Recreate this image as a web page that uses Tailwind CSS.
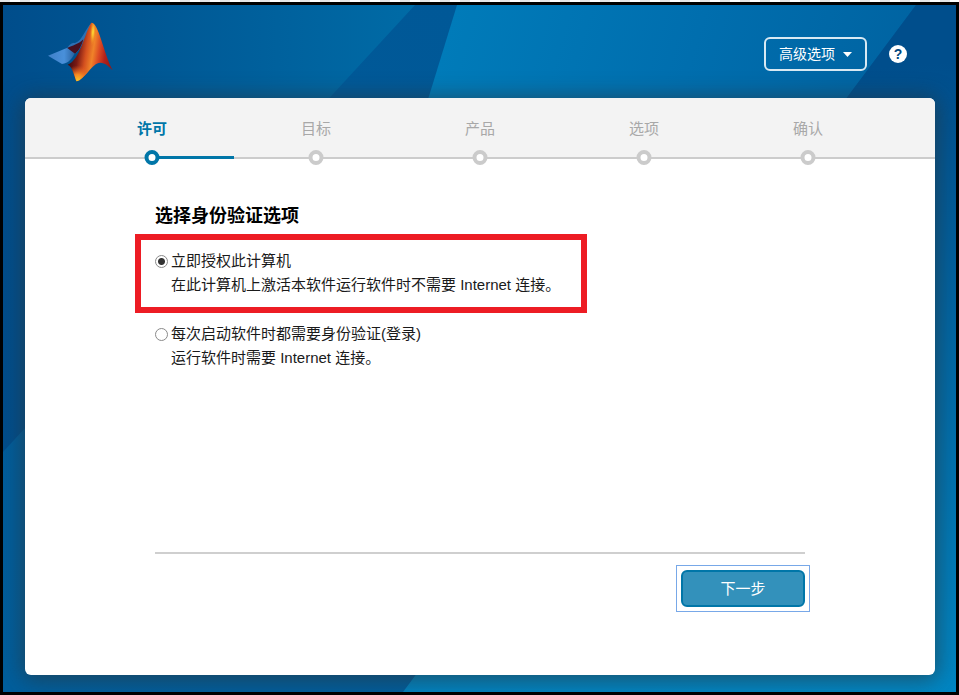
<!DOCTYPE html>
<html lang="zh-CN">
<head>
<meta charset="utf-8">
<meta name="viewport" content="width=device-width, initial-scale=1">
<title>选择身份验证选项</title>
<script src="https://cdn.jsdelivr.net/npm/@tailwindcss/browser@4"></script>
</head>
<body class="flex min-h-screen flex-col bg-black font-['Liberation_Sans','Noto_Sans_CJK_SC',sans-serif] text-[15px] leading-6 text-[#1a1a1a]">
<div class="h-[2px] bg-[repeating-linear-gradient(90deg,#e4e4e4_0px_10px,#ffffff_10px_20px)]"></div>
<div class="relative isolate flex flex-1 flex-col overflow-hidden border-[3px] border-black pr-[21px] pb-[17px] pl-[22px]">
  <!-- faceted backdrop -->
  <svg class="absolute inset-0 -z-10 h-full w-full" viewBox="0 0 953 687" preserveAspectRatio="none" aria-hidden="true">
    <defs>
      <linearGradient id="ga" gradientUnits="userSpaceOnUse" x1="0" y1="0" x2="412" y2="0"><stop offset="0" stop-color="#004d8b"/><stop offset="1" stop-color="#006ba6"/></linearGradient>
      <linearGradient id="gb" gradientUnits="userSpaceOnUse" x1="450" y1="0" x2="0" y2="687"><stop offset="0" stop-color="#005897"/><stop offset="1" stop-color="#005e9c"/></linearGradient>
      <linearGradient id="gc" gradientUnits="userSpaceOnUse" x1="440" y1="40" x2="900" y2="180"><stop offset="0" stop-color="#007bb9"/><stop offset=".5" stop-color="#006eae"/><stop offset="1" stop-color="#0062a0"/></linearGradient>
      <linearGradient id="gd" gradientUnits="userSpaceOnUse" x1="900" y1="60" x2="953" y2="687"><stop offset="0" stop-color="#004e8c"/><stop offset="1" stop-color="#0086c3"/></linearGradient>
    </defs>
    <rect width="953" height="687" fill="url(#gb)"/>
    <polygon points="0,0 412,0 0,447" fill="url(#ga)"/>
    <polygon points="454,0 913,0 600,420 325,420" fill="url(#gc)"/>
    <polygon points="913,0 953,0 953,687 400,687" fill="url(#gd)"/>
  </svg>

  <header class="flex h-[93px] items-center justify-between pr-[28px] pl-[23px] pb-[2px]">
    <svg class="mb-[-3px] h-[60px] w-[65px]" viewBox="22 21 195 178" role="img" aria-label="MATLAB">
      <defs>
        <linearGradient id="wing" x1="0" y1="0" x2="1" y2="0"><stop offset="0" stop-color="#3f80c8"/><stop offset=".6" stop-color="#4990da"/><stop offset="1" stop-color="#285f9c"/></linearGradient>
        <linearGradient id="peak" gradientUnits="userSpaceOnUse" x1="88" y1="105" x2="214" y2="125"><stop offset="0" stop-color="#3c0a12"/><stop offset=".2" stop-color="#7a1a14"/><stop offset=".38" stop-color="#d4501f"/><stop offset=".54" stop-color="#f08329"/><stop offset=".68" stop-color="#dc4a23"/><stop offset=".83" stop-color="#b3221b"/><stop offset="1" stop-color="#941a18"/></linearGradient>
        <radialGradient id="glow" gradientUnits="userSpaceOnUse" cx="0" cy="0" r="1" gradientTransform="translate(157 50) rotate(4) scale(9 42)"><stop offset="0" stop-color="#ffe838"/><stop offset=".4" stop-color="#fbb52a" stop-opacity=".85"/><stop offset="1" stop-color="#f08020" stop-opacity="0"/></radialGradient>
        <radialGradient id="foot" gradientUnits="userSpaceOnUse" cx="112" cy="196" r="46"><stop offset="0" stop-color="#ffc928"/><stop offset=".4" stop-color="#f68a25"/><stop offset="1" stop-color="#e85a20" stop-opacity="0"/></radialGradient>
      </defs>
      <path d="M22 121 L80 97 L103 113 C94 130 84 144 64 146 Z" fill="url(#wing)"/>
      <path d="M80 98 C88 84 94 83 105 82 C124 76 133 42 152 22 C137 60 122 105 103 115 Z" fill="#2d70b3"/>
      <path d="M80 98 C95 91 113 87 128 72 C123 92 114 108 103 115 Z" fill="#48101f"/>
      <path d="M152 22 C174 22 187 108 216 165 C204 153 193 142 179 142 C154 142 133 193 107 198 C101 182 95 153 81 148 C119 133 132 52 152 22 Z" fill="url(#peak)"/>
      <path d="M152 22 C174 22 187 108 216 165 C204 153 193 142 179 142 C154 142 133 193 107 198 C101 182 95 153 81 148 C119 133 132 52 152 22 Z" fill="url(#glow)"/>
      <path d="M152 22 C174 22 187 108 216 165 C204 153 193 142 179 142 C154 142 133 193 107 198 C101 182 95 153 81 148 C119 133 132 52 152 22 Z" fill="url(#foot)"/>
    </svg>
    <div class="flex items-center gap-[22px] pt-[7px]">
      <button type="button" class="flex h-[34px] items-center gap-2 rounded-md border-2 border-[#d8e9f3] px-[13px] text-[14px] text-white">高级选项
        <svg class="h-[5px] w-[9px]" viewBox="0 0 9 5" fill="currentColor" aria-hidden="true"><path d="M0 0h9L4.5 5z"/></svg>
      </button>
      <button type="button" aria-label="帮助" class="flex size-[18px] items-center justify-center rounded-full bg-white text-[14px] leading-none font-bold text-[#00467f]">?</button>
    </div>
  </header>

  <main class="flex flex-1 flex-col rounded-md bg-white shadow-[0_2px_22px_2px_rgba(45,50,50,0.6)]">
    <ol class="grid h-[61px] grid-cols-5 rounded-t-md border-b-2 border-[#cccccc] bg-[#f3f3f3] px-[45px] pt-[19px] text-center text-[#a8a8a8]">
      <li class="relative font-bold text-[#0076a8]" aria-current="step">许可
        <span class="absolute top-[39px] left-1/2 h-[3px] w-1/2 bg-[#0076a8]"></span>
        <span class="absolute top-[33px] left-1/2 size-[15px] -translate-x-1/2 rounded-full border-4 border-[#0076a8] bg-white"></span>
      </li>
      <li class="relative">目标<span class="absolute top-[33px] left-1/2 size-[15px] -translate-x-1/2 rounded-full border-4 border-[#cbcbcb] bg-white"></span></li>
      <li class="relative">产品<span class="absolute top-[33px] left-1/2 size-[15px] -translate-x-1/2 rounded-full border-4 border-[#cbcbcb] bg-white"></span></li>
      <li class="relative">选项<span class="absolute top-[33px] left-1/2 size-[15px] -translate-x-1/2 rounded-full border-4 border-[#cbcbcb] bg-white"></span></li>
      <li class="relative">确认<span class="absolute top-[33px] left-1/2 size-[15px] -translate-x-1/2 rounded-full border-4 border-[#cbcbcb] bg-white"></span></li>
    </ol>

    <form class="flex flex-1 flex-col px-[130px] pt-[45px] pb-[63px]">
      <fieldset>
        <legend class="text-[18px] font-bold text-black">选择身份验证选项</legend>
        <div class="mt-[6px] -ml-5 flex h-[79px] w-[452px] max-w-full gap-[3px] border-6 border-[#ed1c24] pt-[9px] pl-[14px]">
          <input id="now" type="radio" name="auth" checked class="mt-[6px] size-[13px] shrink-0 appearance-none rounded-full border border-[#8a8a8a] bg-white checked:bg-[radial-gradient(circle,#333333_0_3px,#ffffff_4px)]">
          <label for="now" class="whitespace-nowrap">立即授权此计算机<br>在此计算机上激活本软件运行软件时不需要 Internet 连接。</label>
        </div>
        <div class="mt-[9px] flex gap-[3px]">
          <input id="each" type="radio" name="auth" class="mt-[6px] size-[13px] shrink-0 appearance-none rounded-full border border-[#8a8a8a] bg-white checked:bg-[radial-gradient(circle,#333333_0_3px,#ffffff_4px)]">
          <label for="each">每次启动软件时都需要身份验证(登录)<br>运行软件时需要 Internet 连接。</label>
        </div>
      </fieldset>
      <div class="mt-auto border-t-2 border-[#cfcfcf] pt-[11px]">
        <div class="-mr-[5px] ml-auto w-fit border border-[#78a8e8] p-1">
          <button type="submit" class="block h-[37px] w-[124px] rounded-md border-2 border-[#0076a8] bg-[#3391bb] text-white">下一步</button>
        </div>
      </div>
    </form>
  </main>
</div>
</body>
</html>
